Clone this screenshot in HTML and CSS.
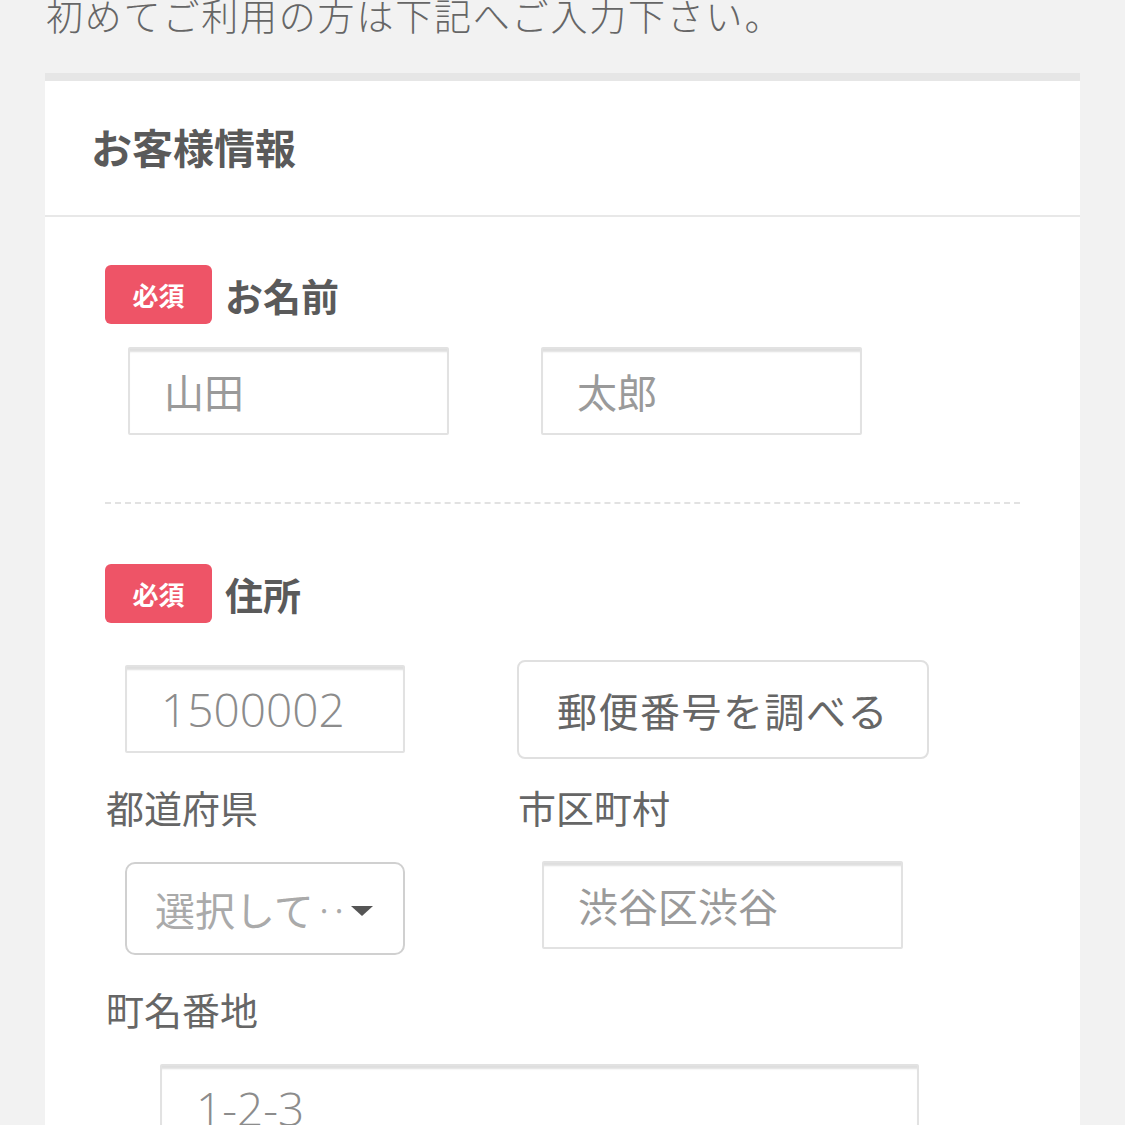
FILE: index.html
```html
<!DOCTYPE html>
<html lang="ja">
<head>
<meta charset="utf-8">
<link rel="stylesheet" href="styles.css">
</head>
<body>
<p class="intro">初めてご利用の方は下記へご入力下さい。</p>
<section class="card">
  <h2 class="card-head">お客様情報</h2>
  <div class="card-body">
    <div class="field-title"><span class="badge">必須</span><span class="title">お名前</span></div>
    <div class="grid name-row">
      <div class="input name-1"><span class="ph">山田</span></div>
      <div class="input name-2"><span class="ph">太郎</span></div>
    </div>
    <div class="dash"></div>
    <div class="field-title"><span class="badge">必須</span><span class="title">住所</span></div>
    <div class="grid zip-row">
      <div class="input zip"><span class="ph num">1500002</span></div>
      <div class="btn">郵便番号を調べる</div>
    </div>
    <div class="grid label-row">
      <div class="label">都道府県</div>
      <div class="label">市区町村</div>
    </div>
    <div class="grid pref-row">
      <div class="select"><span class="ph">選択して</span><span class="dots">··</span><span class="arrow"></span></div>
      <div class="input city"><span class="ph">渋谷区渋谷</span></div>
    </div>
    <div class="label town-label">町名番地</div>
    <div class="input town"><span class="ph num">1-2-3</span></div>
  </div>
</section>
</body>
</html>
```

FILE: styles.css
```css
html, body {
  margin: 0;
  padding: 0;
  background: #f2f2f2;
  font-family: "Noto Sans CJK JP", "Noto Sans", sans-serif;
  height: 1125px;
  overflow: hidden;
}
.intro {
  margin: -5px 0 0 46px;
  font-size: 37px;
  line-height: 40px;
  color: #666;
  font-weight: 300;
  letter-spacing: 1.8px;
}
.card {
  margin: 38px 45px 0 45px;
  border-top: 8px solid #e6e6e6;
  background: #fff;
  height: 1200px;
}
.card-head {
  margin: 0;
  height: 136px;
  box-sizing: border-box;
  padding-left: 46px;
  padding-bottom: 4px;
  display: flex;
  align-items: center;
  font-size: 41px;
  font-weight: 700;
  color: #5a5a5a;
  border-bottom: 2px solid #e8e8e8;
}
.card-body {
  padding: 48px 60px 0 60px;
}
.field-title {
  display: flex;
  align-items: center;
  height: 59px;
}
.badge {
  width: 107px;
  height: 59px;
  border-radius: 6px;
  background: #ee5467;
  color: #fff;
  font-size: 26px;
  font-weight: 700;
  display: flex;
  align-items: center;
  justify-content: center;
}
.title {
  margin-left: 13px;
  font-size: 38px;
  font-weight: 700;
  color: #5a5a5a;
}
.grid {
  display: grid;
  grid-template-columns: 412px 1fr;
  align-items: start;
}
.input {
  box-sizing: border-box;
  height: 88px;
  border: 2px solid #e2e2e2;
  border-radius: 2px;
  box-shadow: inset 0 4px 2px -1px rgba(0, 0, 0, 0.13);
  display: flex;
  align-items: center;
  padding-left: 34px;
  background: #fff;
}
.ph {
  font-size: 40px;
  color: #9a9a9a;
  white-space: nowrap;
}
.num {
  font-family: "Open Sans", "Noto Sans", sans-serif;
  font-size: 46px;
  font-weight: 300;
  color: #8c8c8c;
}
.name-row {
  margin-top: 23px;
}
.name-1 {
  width: 321px;
  margin-left: 23px;
}
.name-2 {
  width: 321px;
  margin-left: 24px;
}
.dash {
  margin-top: 67px;
  border-top: 2px dashed #e2e2e2;
  height: 0;
  margin-bottom: 60px;
}
.zip-row {
  margin-top: 37px;
}
.zip {
  width: 280px;
  margin-left: 20px;
  margin-top: 5px;
  padding-left: 34px;
}
.btn {
  box-sizing: border-box;
  width: 412px;
  height: 99px;
  border: 2px solid #e0e0e0;
  border-radius: 8px;
  display: flex;
  align-items: center;
  justify-content: center;
  font-size: 40px;
  color: #666;
  letter-spacing: 1.5px;
}
.label-row {
  margin-top: 21px;
}
.label {
  font-size: 38px;
  line-height: 54px;
  color: #666;
  margin-left: 1px;
}
.pref-row {
  margin-top: 27px;
}
.select {
  box-sizing: border-box;
  width: 280px;
  height: 93px;
  margin-left: 20px;
  margin-top: 1px;
  border: 2px solid #d0d0d0;
  border-radius: 10px;
  display: flex;
  align-items: center;
  padding-left: 28px;
}
.select .ph {
  color: #aaa;
}
.dots {
  font-size: 30px;
  color: #aaa;
  margin-left: 2px;
  letter-spacing: -2px;
}
.arrow {
  width: 0;
  height: 0;
  border-left: 11px solid transparent;
  border-right: 11px solid transparent;
  border-top: 10px solid #555;
  margin-left: 6px;
  margin-top: 4px;
}
.city {
  width: 361px;
  margin-left: 25px;
}
.town-label {
  margin-top: 27px;
}
.town {
  width: 759px;
  margin-left: 55px;
  margin-top: 28px;
  padding-left: 34px;
}
```
